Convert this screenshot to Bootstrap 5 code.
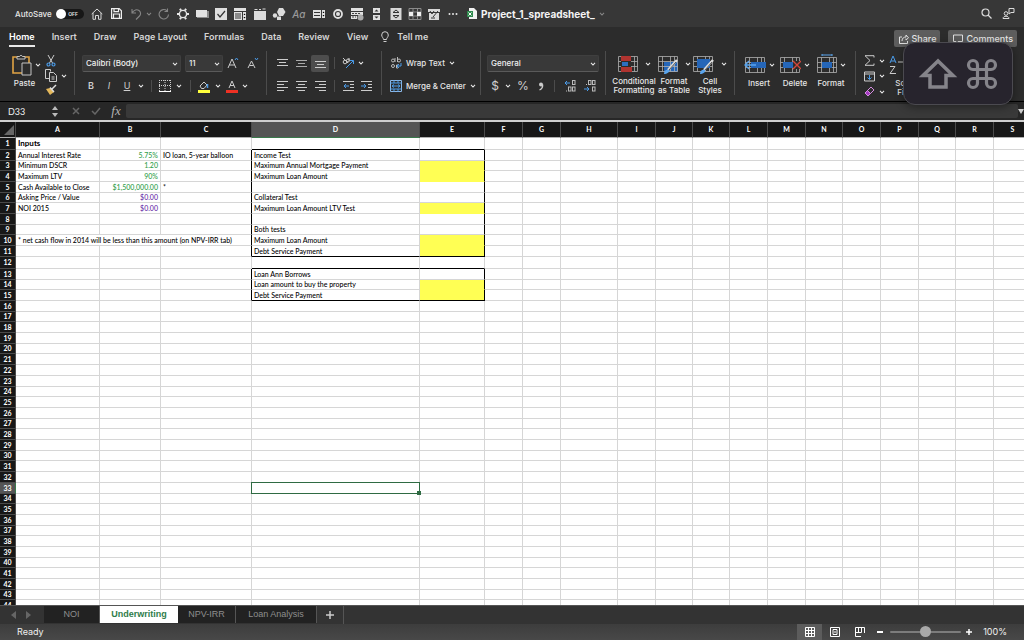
<!DOCTYPE html>
<html lang="en" data-bs-theme="dark">
<head>
<meta charset="utf-8">
<meta name="viewport" content="width=device-width, initial-scale=1">
<title>Project_1_spreadsheet_</title>
<link href="https://cdn.jsdelivr.net/npm/bootstrap@5.3.0/dist/css/bootstrap.min.css" rel="stylesheet">
<style>
  :root { --ui: Inter, "Liberation Sans", sans-serif; --cell: Lato, "Noto Sans", sans-serif; }
  body { font-family: var(--ui); font-size: 8px; line-height: 10px; color: #e6e6e6; background: #2c2c2c; }
  svg { display: block; flex: none; }
  .ib { background: none; border: 0; padding: 0; color: inherit; display: inline-flex; align-items: center; justify-content: center; flex: none; font-weight: 500; }
  .titlebar { height: 27px; background: #373737; font-size: 8px; }
  .quickbar { width: 284px; }
  .redo { margin: 0 2px; }
  .autosave { font-size: 8px; font-weight: 500; padding-left: 15px; width: 88px; }
  .switch { appearance: none; width: 28px; height: 10px; border-radius: 5px; background: #171717; margin: 0; position: relative; flex: none; }
  .switch::before { content: ""; position: absolute; left: 0; top: 0; width: 10px; height: 10px; border-radius: 50%; background: #fff; }
  .switch-text { position: absolute; right: 10px; top: 0; font-size: 5px; font-weight: 600; pointer-events: none; }
  .doc-title { font-size: 10px; font-weight: 700; color: #f4f4f4; margin-left: 7px; }
  .menubar { height: 22px; font-size: 9px; font-weight: 600; gap: 17px; padding-left: 9px; }
  .menubar a { color: #d4d4d4; text-decoration: none; height: 20px; line-height: 20px; }
  .menubar a.active { color: #fff; font-weight: 600; border-bottom: 2px solid #e8e8e8; }
  .menubar a.tell { margin-left: -4px; }
  .acts { padding-right: 7px; padding-top: 3px; }
  .act { height: 17px; background: #5d5d5d; border: 0; border-radius: 2px; color: #e6e6e6; font-size: 9px; font-weight: 500; padding: 0 4px 0 5px; display: inline-flex; align-items: center; gap: 3px; }
  .ribbon { height: 53px; padding-top: 2px; border-bottom: 1px solid #000; overflow: hidden; }
  .group { height: 44px; flex: none; border-right: 1px solid #4c4c4c; }
  .two { display: flex; flex-direction: column; gap: 4px; padding-top: 2px; }
  .two > .line1 { height: 20px; display: flex; align-items: center; }
  .two > .line2 { height: 18px; display: flex; align-items: center; }
  .sep { width: 1px; height: 12px; background: #4c4c4c; flex: none; margin: 0 5px; }
  .g-clip { width: 75px; } .g-font { width: 192px; padding-left: 7px; } .g-align { width: 115px; padding-left: 6px; }
  .g-wrap { width: 99px; padding-left: 8px; } .g-num { width: 125px; padding-left: 6px; } .g-style { width: 129px; padding-left: 6px; }
  .g-cells { width: 121px; padding-left: 6px; }
  .w10 { width: 10px; } .w12 { width: 12px; } .w16 { width: 16px; } .w18 { width: 18px; } .w19 { width: 19px; } .w20 { width: 20px; }
  .pick { position: relative; flex: none; }
  .pick select { appearance: none; width: 100%; height: 17px; border: 1px solid #3f3f3f; border-bottom-color: #5a5a5a; border-radius: 2px; background: #393939; color: #f0f0f0; font-size: 8px; font-weight: 500; padding: 0 3px; line-height: 10px; display: block; }
  .pick svg { position: absolute; right: 3px; top: 7px; pointer-events: none; }
  .p-font { width: 99px; } .p-size { width: 38px; } .p-num { width: 112px; }
  .big { background: none; border: 0; padding: 0; color: inherit; width: 36px; flex: none; font-weight: 500; line-height: 9px; white-space: nowrap; display: flex; flex-direction: column; align-items: center; overflow: visible; }
  .big .pic { height: 28px; display: flex; align-items: center; gap: 3px; }
  .w44 { width: 44px; }
  .pressed { background: #4d4d4d; border-radius: 2px; height: 17px; }
  .let { font-size: 9px; font-weight: 400; color: #cfcfcf; } .bold { font-weight: 600; }
  .sign { font-size: 12px; font-weight: 400; color: #cfcfcf; }
  .faint { color: #999; font-size: 10px; }
  .fbar { height: 18px; background: #272727; }
  .fbar input { border: 0; color: #f0f0f0; font-family: var(--cell); font-size: 9px; padding: 0; height: 14px; }
  .namebox { width: 40px; background: transparent; }
  .formula { background: #393939; border-radius: 2px; }
  .fx { font-family: "Liberation Serif", serif; font-style: italic; font-size: 13px; color: #b4b4b4; }
  .edge { height: 2px; background: #cfcfcf; }
  .sheet { background: #fff; overflow: hidden; }
  .cells { width: calc(100% + 8px); table-layout: fixed; border-collapse: separate; border-spacing: 0; font-family: var(--cell); font-size: 7px; color: #000; }
  .cells th, .cells td { padding: 0; line-height: 10px; height: 11px; white-space: nowrap; border: 0 solid #d6d6d6; border-width: 0 1px 1px 0; }
  .cells td { padding: 0 2px; font-weight: 500; }
  .cells th { background: #171717; color: #fff; text-align: center; font-weight: 700; border-color: #4a4a4a; font-size: 7px; }
  .cells thead th { height: 16px; line-height: 15px; border-bottom-color: #b0b0b0; }
  .cells thead th.cur { background: #555; border-bottom-color: #3a7a4c; }
  .cells tbody th.cur { background: #555; border-right-color: #3a7a4c; }
  .cells .short th, .cells .short td { height: 10px; line-height: 9px; }
  .cells .tall th, .cells .tall td { height: 12px; line-height: 11px; }
  .cells td.kr { border-right-color: #000; } .cells td.kb { border-bottom-color: #000; }
  .cells td.ye { background: #ffff54; } .cells td.ye:not(.kb) { border-bottom-color: #ffff54; }
  .cells td.gr { color: #2fa04a; } .cells td.pu { color: #6a2fa8; } .cells td.num { text-align: right; }
  .cells td.head { font-weight: 700; font-size: 8px; }
  .picked { position: relative; }
  .picked i { position: absolute; inset: -1px; border: 1px solid #2f6b43; }
  .picked i::after { content: ""; position: absolute; right: -2px; bottom: -2px; width: 4px; height: 4px; background: #2f6b43; }
  .c-row { width: 16px; } .c-a { width: 84px; } .c-b { width: 61px; } .c-c { width: 91px; } .c-d { width: 168px; } .c-e { width: 65px; }
  .c-h { width: 57px; } .c-37 { width: 37px; } .c-38 { width: 38px; }
  .tabs { height: 19px; background: #333; border-top: 1px solid #555; font-family: "Liberation Sans", sans-serif; font-size: 9px; }
  .tabs a { color: #8e8e8e; text-decoration: none; background: #222; height: 17px; line-height: 17px; text-align: center; border-right: 1px solid #555; flex: none; }
  .tabs a.active { background: #fff; color: #2f7d4a; font-weight: 700; border: 0; }
  .t-nav { width: 44px; padding-left: 9px; }
  .t-noi { width: 56px; } .t-und { width: 78px; } .t-npv { width: 58px; } .t-loan { width: 81px; }
  .plus { width: 27px; height: 18px; border-right: 1px solid #555; }
  .status { height: 16px; background: linear-gradient(#3d3d3d, #484848); font-size: 9px; color: #f0f0f0; padding: 0 17px; }
  .vw { width: 25px; height: 16px; } .vw.on { background: #5c5c5c; }
  .zoomer { appearance: none; width: 71px; height: 12px; background: transparent; margin: 0 2px; }
  .zoomer::-webkit-slider-runnable-track { height: 2px; background: #7c7c7c; border-radius: 1px; }
  .zoomer::-webkit-slider-thumb { appearance: none; width: 11px; height: 11px; margin-top: -5px; border-radius: 50%; background: #a8a8a8; }
  .keys { position: absolute; top: 42px; right: 11px; width: 110px; height: 63px; border-radius: 12px; background: #27242d; border: 1px solid #4b4a50; box-shadow: 0 2px 8px #0006; z-index: 5; }
</style>
</head>
<body class="vh-100 overflow-hidden d-flex flex-column position-relative">
<svg width="0" height="0" class="position-absolute"><defs>
  <symbol id="chev" viewBox="0 0 6 4"><path d="M1 .8 3 3 5 .8" fill="none" stroke="currentColor" stroke-width="1.1"/></symbol>
  <symbol id="grid" viewBox="0 0 20 16"><path d="M.5.5h19v15H.5zM.5 5.500h19M.5 10.500h19M4.500.5v15M12.500.5v15M16.500.5v15" fill="none" stroke="#b0b0b0" stroke-opacity=".8"/></symbol>
</defs></svg>

<header class="titlebar d-flex align-items-center flex-shrink-0">
  <label class="autosave d-flex align-items-center gap-1 position-relative">AutoSave<input type="checkbox" class="switch" role="switch"><span class="switch-text">OFF</span></label>
  <button class="ib w18" aria-label="Home"><svg width="12" height="12" viewBox="0 0 12 12" fill="none" stroke="#d8d8d8"><path d="M.7 6 6 1l5.300 5M2 5v6.300h2.500V7.500h3v3.800H10V5"/></svg></button>
  <button class="ib w20" aria-label="Save"><svg width="11" height="11" viewBox="0 0 11 11" fill="none" stroke="#eee" stroke-width="1.200"><path d="M.6.6h7.600l2.200 2.200v7.600H.6zM3 .6v3h4.500v-3M2.500 10.400V6h6v4.400"/></svg></button>
  <button class="ib w20" aria-label="Undo"><svg width="11" height="12" viewBox="0 0 11 12" fill="none" stroke="#858585" stroke-width="1.100"><path d="M1 1v4h4M1 5C3 1.500 6 1.200 8 2.500c2 1.500 2 4 .5 5.500L5 11.500"/></svg></button>
  <button class="ib" aria-label="Undo history"><svg width="6" height="4" color="#858585"><use href="#chev"/></svg></button>
  <button class="ib w20 redo" aria-label="Redo"><svg width="12" height="12" viewBox="0 0 12 12" fill="none" stroke="#858585" stroke-width="1.100"><path d="M10.500 6.500A4.700 4.700 0 1 1 9 2.800M9.500.5v3h-3"/></svg></button>
  <div class="quickbar d-flex align-items-center justify-content-between flex-shrink-0">
    <button class="ib" aria-label="Settings"><svg width="14" height="14" viewBox="0 0 14 14" fill="none" stroke="#e6e6e6"><circle cx="7" cy="7" r="3.600" stroke-width="1.400"/><path stroke-width="2" d="M11 7h2M9 10.500l1 1.700M5 10.500l-1 1.700M3 7H1M5 3.500 4 1.800M9 3.500l1-1.700"/></svg></button>
    <button class="ib" aria-label="Button control"><svg width="14" height="14" viewBox="0 0 14 14"><path fill="#8b8b8b" d="M2 4h12v7H2z"/><path fill="#e2e2e2" d="M1 3h11v7H1z"/></svg></button>
    <button class="ib" aria-label="Check box"><svg width="14" height="14" viewBox="0 0 14 14"><path fill="#dedede" d="M1 1h12v12H1z"/><path d="m3.500 7 2.500 3 5-6" fill="none" stroke="#333" stroke-width="1.200"/></svg></button>
    <button class="ib" aria-label="List box"><svg width="14" height="14" viewBox="0 0 14 14"><path fill="#e2e2e2" d="M1 1h12v3H1zM1 5h8v8H1zM10 5h3v8h-3z"/><path d="M2 7h6M2 9h6M2 11h6" stroke="#333"/><path d="m10.500 8 1-1.500 1 1.500zM10.500 10l1 1.500 1-1.500z"/></svg></button>
    <button class="ib" aria-label="Group box"><svg width="14" height="14" viewBox="0 0 14 14"><path fill="#dcdcdc" d="M1 4h12v9H1z"/><path d="M1.500 2.500h3M6 2.500h2M9.500 2h3" stroke="#dcdcdc"/></svg></button>
    <button class="ib" aria-label="Shapes"><svg width="14" height="14" viewBox="0 0 14 14" fill="#dcdcdc"><path d="M7 1h4l2.500 4L11 9H7L5 5z"/><circle cx="3" cy="8.500" r="2.200"/><path d="M5 9.500h4v3.500H5z"/></svg></button>
    <button class="ib faint fst-italic w16" aria-label="Label">Aɑ</button>
    <button class="ib" aria-label="Combo box"><svg width="14" height="14" viewBox="0 0 14 14"><path fill="#e0e0e0" d="M1 3h8v8H1zM10 3h3v8h-3z"/><path d="M2 5.500h6M2 8.500h6" stroke="#333"/><path d="m10.500 6 1-1.500 1 1.500zM10.500 8l1 1.500 1-1.500z"/></svg></button>
    <button class="ib" aria-label="Option button"><svg width="14" height="14" viewBox="0 0 14 14" fill="none"><circle cx="7" cy="7" r="4" stroke="#e0e0e0" stroke-width="1.800"/><circle cx="7" cy="7" r="2" fill="#e0e0e0"/></svg></button>
    <button class="ib" aria-label="Combo list"><svg width="14" height="14" viewBox="0 0 14 14"><path fill="#e0e0e0" d="M1 1h12v3H1zM1 5h12v3H1zM1 9h6v3H1z"/><path d="M2 6.500h9M2 10h4" stroke="#444" stroke-dasharray="2 1"/><circle cx="10.500" cy="10.500" r="3" fill="#aaa"/></svg></button>
    <button class="ib" aria-label="Scroll bar"><svg width="14" height="14" viewBox="0 0 14 14" fill="#e0e0e0"><path d="M4 1h7v5H4zM4 8h7v5H4z"/><path d="m5.500 4.500 2-2 2 2zM5.500 9.500l2 2 2-2z" fill="#333"/></svg></button>
    <button class="ib" aria-label="Spin button"><svg width="14" height="14" viewBox="0 0 14 14"><path fill="#d8d8d8" d="M1.500 1h11v12h-11z"/><path d="M4 5.500 7 3l3 2.500zM4 8.500 7 11l3-2.500z" fill="none" stroke="#333"/></svg></button>
    <button class="ib" aria-label="Grid lines"><svg width="14" height="14" viewBox="0 0 14 14"><path d="M1 1.500h12v11H1zM1 5h12M1 9h12M5 1v12M9.500 1v12" fill="none" stroke="#8a8a8a"/><path fill="#eee" d="M1 5h4v4H1zM9 5h4v4H9z"/></svg></button>
    <button class="ib" aria-label="Edit code"><svg width="14" height="14" viewBox="0 0 14 14"><path fill="#d8d8d8" d="M1 2h12v3H1zM2 6h10v7H2z"/><path d="m3 4 2 3 2-3M6 10l5-6M4 11h4" fill="none" stroke="#333"/></svg></button>
    <button class="ib" aria-label="More"><svg width="14" height="14" viewBox="0 0 14 14" fill="#e6e6e6"><circle cx="3.500" cy="7" r="1"/><circle cx="7" cy="7" r="1"/><circle cx="10.500" cy="7" r="1"/></svg></button>
  </div>
  <button class="ib doc-title gap-1"><svg width="10" height="11" viewBox="0 0 10 11"><path fill="#f2f2f2" d="M2 0h5l3 3v8H2z"/><path fill="#2f8a4e" d="M0 3h6v6H0z"/><path stroke="#fff" d="m1.500 4.500 3 3M4.500 4.500l-3 3"/></svg>Project_1_spreadsheet_<svg width="6" height="4" color="#858585"><use href="#chev"/></svg></button>
  <button class="ib w12 ms-auto" aria-label="Search"><svg width="11" height="11" viewBox="0 0 11 11" fill="none" stroke="#dcdcdc" stroke-width="1.200"><circle cx="4.500" cy="4.500" r="3.500"/><path d="m7 7 3.500 3.500"/></svg></button>
  <button class="ib w12 ms-2 me-2 px-2" aria-label="Presence"><svg width="13" height="13" viewBox="0 0 13 13" fill="none" stroke="#dcdcdc"><circle cx="4" cy="6.500" r="1.800"/><path d="M1 11.500c0-3 6-3 6 0zM7 1.500h5v4H9l-2 1.500z"/></svg></button>
</header>

<div class="d-flex align-items-start flex-shrink-0">
  <nav class="menubar d-flex flex-grow-1 align-items-start">
    <a href="#" class="active">Home</a><a href="#">Insert</a><a href="#">Draw</a><a href="#">Page Layout</a><a href="#">Formulas</a><a href="#">Data</a><a href="#">Review</a><a href="#">View</a>
    <a href="#" class="tell d-flex align-items-center gap-2"><svg width="8" height="12" viewBox="0 0 8 12" fill="none" stroke="#d0d0d0"><path d="M2.500 8.500C2.500 7 .7 6 .7 4a3.300 3.300 0 0 1 6.600 0c0 2-1.800 3-1.800 4.500zM2.500 10.500h3"/></svg>Tell me</a>
  </nav>
  <div class="acts d-flex gap-2">
    <button class="act"><svg width="10" height="10" viewBox="0 0 10 10" fill="none" stroke="#e0e0e0"><path d="M3 3H.5v6.500h8V7M3 7c0-3 2-4 4-4V1l2.500 2.800L7 6V4.500"/></svg>Share</button>
    <button class="act"><svg width="10" height="10" viewBox="0 0 10 10" fill="none" stroke="#e0e0e0"><path d="M.5 1h9v6.500H5l-2 2v-2H.5z"/></svg>Comments</button>
  </div>
</div>

<div class="ribbon d-flex flex-shrink-0">
  <div class="group g-clip d-flex">
    <button class="big w-auto ps-2 ms-1"><span class="pic"><svg width="20" height="22" viewBox="0 0 20 22" fill="none"><path d="M1 3h16v16H1z" stroke="#e0a344" stroke-width="1.600"/><path d="M5 5V2.500h2.500a1.600 1.600 0 0 1 3 0H13V5z" fill="#2c2c2c" stroke="#c4c4c4"/><path d="M10 9h9v12h-9z" fill="#2c2c2c" stroke="#c4c4c4"/></svg><svg width="6" height="4"><use href="#chev"/></svg></span><span class="pe-1">Paste</span></button>
    <div class="d-flex flex-column justify-content-between ps-1 pt-1">
      <button class="ib justify-content-start" aria-label="Cut"><svg width="12" height="12" viewBox="0 0 12 12" fill="none" stroke="#ccc"><path d="m3 0 4.500 8M9 0 4.500 8"/><g stroke="#4a9be8" stroke-width="1.200"><circle cx="3.500" cy="9.500" r="1.500"/><circle cx="8.500" cy="9.500" r="1.500"/></g></svg></button>
      <button class="ib gap-1" aria-label="Copy"><svg width="12" height="13" viewBox="0 0 12 13" fill="none" stroke="#ccc"><path d="M4 9.500H.5v-9h5v2M4.500 3.500h4l3 3v6h-7zM6.500 8h3M6.500 10h3"/></svg><svg width="6" height="4"><use href="#chev"/></svg></button>
      <button class="ib justify-content-start" aria-label="Format painter"><svg width="12" height="11" viewBox="0 0 12 11"><path fill="#e3b75a" d="m1 5 4-1 4 4-4 3z"/><path d="M5 3.500 9 8M7 5l4-4" stroke="#ddd" stroke-width="1.500"/></svg></button>
    </div>
  </div>

  <div class="group two g-font">
    <div class="line1 gap-1">
      <div class="pick p-font"><select aria-label="Font"><option>Calibri (Body)</option></select><svg width="6" height="4"><use href="#chev"/></svg></div>
      <div class="pick p-size"><select aria-label="Font size"><option>11</option></select><svg width="6" height="4"><use href="#chev"/></svg></div>
      <button class="ib w12" aria-label="Increase font size"><svg width="12" height="12" viewBox="0 0 12 12" fill="none" stroke="#ccc"><path d="M1 11 5 2l4 9M2.300 8h5.400"/><path stroke="#4a9be8" d="m8 3 1.500-2L11 3"/></svg></button>
      <button class="ib w20" aria-label="Decrease font size"><svg width="12" height="12" viewBox="0 0 12 12" fill="none" stroke="#ccc"><path d="m1 11 3.500-7L8 11M2.500 8.500h4"/><path stroke="#4a9be8" d="m8 1 1.500 2L11 1"/></svg></button>
    </div>
    <div class="line2">
      <button class="ib w18 let bold">B</button><button class="ib w18 let fst-italic">I</button><button class="ib w18 let text-decoration-underline">U</button><button class="ib w10" aria-label="Underline styles"><svg width="6" height="4"><use href="#chev"/></svg></button>
      <span class="sep"></span>
      <button class="ib w16" aria-label="Borders"><svg width="12" height="12" viewBox="0 0 12 12" fill="none" stroke="#d0d0d0"><path stroke-dasharray="1 1" d="M.5 0v11M6 0v11M11.500 0v11M0 .5h12M0 5.500h12"/><path stroke="#fff" d="M0 11.500h12"/></svg></button><button class="ib w12" aria-label="Border styles"><svg width="6" height="4"><use href="#chev"/></svg></button>
      <span class="sep"></span>
      <button class="ib w16" aria-label="Fill colour"><svg width="12" height="13" viewBox="0 0 12 13" fill="none"><path stroke="#ccc" d="m2 6 4-4 3 3-3 3.500H3.500z"/><path stroke="#4a9be8" stroke-width="1.500" d="M9.500 4v4"/><path fill="#ffff3c" d="M0 10h12v3H0z"/></svg></button><button class="ib w12" aria-label="Fill colours"><svg width="6" height="4"><use href="#chev"/></svg></button>
      <button class="ib w16" aria-label="Font colour"><svg width="12" height="13" viewBox="0 0 12 13" fill="none"><path stroke="#ccc" d="m3 8 3-7 3 7M4 5.500h4"/><path fill="#ee3124" d="M0 10h12v3H0z"/></svg></button><button class="ib w10" aria-label="Font colours"><svg width="6" height="4"><use href="#chev"/></svg></button>
    </div>
  </div>

  <div class="group two g-align">
    <div class="line1">
      <button class="ib w19" aria-label="Top align"><svg width="11" height="10" stroke="#ccc"><path d="M0 1.500h11M2 4.500h7M0 7.500h11"/></svg></button>
      <button class="ib w19" aria-label="Middle align"><svg width="11" height="10" stroke="#aaa"><path d="M0 2.500h11M2 5.500h7M0 8.500h11"/></svg></button>
      <button class="ib w18 pressed" aria-label="Bottom align"><svg width="11" height="12" stroke="#ccc"><path d="M0 4.500h11M2 7.500h7M0 10.500h11"/></svg></button>
      <span class="sep"></span>
      <button class="ib w16" aria-label="Orientation"><svg width="12" height="12" viewBox="0 0 12 12" fill="none" stroke="#ccc"><circle cx="3" cy="5" r="1.800"/><path d="m1 1 5 5M7 1v3"/><circle cx="6" cy="3.500" r="1.500"/><path stroke="#4a9be8" d="m4 11 7-7M8 3.500h3.500V7"/></svg></button><button class="ib w10" aria-label="Orientations"><svg width="6" height="4"><use href="#chev"/></svg></button>
    </div>
    <div class="line2">
      <button class="ib w19" aria-label="Align left"><svg width="11" height="10" stroke="#ccc"><path d="M0 .5h11M0 3.500h7M0 6.500h11M0 9.500h7"/></svg></button>
      <button class="ib w19" aria-label="Centre"><svg width="11" height="10" stroke="#ccc"><path d="M0 .5h11M2 3.500h7M0 6.500h11M2 9.500h7"/></svg></button>
      <button class="ib w18" aria-label="Align right"><svg width="11" height="10" stroke="#ccc"><path d="M0 .5h11M4 3.500h7M0 6.500h11M4 9.500h7"/></svg></button>
      <span class="sep"></span>
      <button class="ib w16" aria-label="Decrease indent"><svg width="11" height="10" fill="none" stroke="#ccc"><path d="M0 .5h11M7 3.500h4M7 6.500h4M0 9.500h11"/><path stroke="#4a9be8" d="M6 5H1M3 3 1 5l2 2"/></svg></button>
      <button class="ib w20" aria-label="Increase indent"><svg width="11" height="10" fill="none" stroke="#ccc"><path d="M0 .5h11M7 3.500h4M7 6.500h4M0 9.500h11"/><path stroke="#4a9be8" d="M0 5h5M3 3l2 2-2 2"/></svg></button>
    </div>
  </div>

  <div class="group two g-wrap">
    <div class="line1"><button class="ib gap-1"><svg width="12" height="12" viewBox="0 0 12 12" fill="none" stroke="#bbb"><circle cx="3" cy="3.500" r="1.500"/><path d="M5 1v4M7.500 0v5M8 8H6.500v3H8"/><circle cx="9" cy="3.500" r="1.500"/><circle cx="3" cy="9" r="1.500"/><path stroke="#4a9be8" d="M11 6v3H7M9 7 7 9l2 2"/></svg>Wrap Text<svg width="6" height="4"><use href="#chev"/></svg></button></div>
    <div class="line2"><button class="ib gap-1"><svg width="12" height="12" viewBox="0 0 12 12" fill="none" stroke="#4a9be8"><path d="M.5.5h11v11H.5z" stroke="#8bb8e8"/><path d="M.5 3h11M.5 9h11M4 .5V3M8 .5V3M4 9v2.500M8 9v2.500M2 6h8M4 4.500 2 6l2 1.500M8 4.500 10 6 8 7.500"/></svg>Merge &amp; Center<svg width="6" height="4"><use href="#chev"/></svg></button></div>
  </div>

  <div class="group two g-num">
    <div class="line1"><div class="pick p-num"><select aria-label="Number format"><option>General</option></select><svg width="6" height="4"><use href="#chev"/></svg></div></div>
    <div class="line2">
      <button class="ib w16 sign">$</button><button class="ib w10" aria-label="Currencies"><svg width="6" height="4"><use href="#chev"/></svg></button>
      <button class="ib w20 sign">%</button>
      <button class="ib w16" aria-label="Comma style"><svg width="6" height="9" viewBox="0 0 6 9"><circle cx="3" cy="2.600" r="2" fill="#ccc"/><path d="M4.500 2.500C5 5 4 7 1.500 8" fill="none" stroke="#ccc" stroke-width="1.300"/></svg></button>
      <span class="sep"></span>
      <button class="ib w20" aria-label="Increase decimal"><svg width="12" height="12" viewBox="0 0 12 12" fill="none" stroke="#bbb"><path stroke="#4a9be8" d="M6 3H1M3 1 1 3l2 2"/><rect x="8.500" y=".5" width="2.500" height="4"/><rect x="4.500" y="7" width="2.500" height="4"/><rect x="8.500" y="7" width="2.500" height="4"/><path d="M2 11h1"/></svg></button>
      <button class="ib w20" aria-label="Decrease decimal"><svg width="12" height="12" viewBox="0 0 12 12" fill="none" stroke="#bbb"><path stroke="#4a9be8" d="M0 9h5M3 7l2 2-2 2"/><rect x="4.500" y=".5" width="2.500" height="4"/><rect x="8.500" y=".5" width="2.500" height="4"/><rect x="8.500" y="7" width="2.500" height="4"/><path d="M2 4.500h1"/></svg></button>
    </div>
  </div>

  <div class="group g-style d-flex">
    <button class="big w44"><span class="pic"><svg width="20" height="16"><use href="#grid" width="20" height="16"/><path fill="#b03430" d="M3 0h10v5H3zM3 11h11v5H3z"/><path fill="#2c2c2c" d="M3 5h10v6H3z"/><path fill="#2d6fc0" d="M4 6h6v4H4z"/></svg><svg class="ms-1" width="6" height="4"><use href="#chev"/></svg></span>Conditional<br>Formatting</button>
    <button class="big"><span class="pic"><svg width="20" height="20" viewBox="0 -2 20 20"><path fill="#2566b8" d="M6 6h14v10H6z"/><use href="#grid" width="20" height="16"/><path d="m19 4-9 10" stroke="#ddd" stroke-width="2.500"/><path d="m18 6-7 8" stroke="#555"/><path fill="#5aa5ee" d="M6 18c0-3 2-5 5-4 1 2-2 4-5 4z"/></svg><svg class="ms-1" width="6" height="4"><use href="#chev"/></svg></span><span class="text-center">Format<br>as Table</span></button>
    <button class="big"><span class="pic"><svg width="21" height="20" viewBox="0 -2 21 20"><use href="#grid" width="20" height="16"/><path fill="#2566b8" d="M4 3h13v9H4z"/><path d="m20 4-9 10" stroke="#ddd" stroke-width="2.500"/><path d="m19 6-7 8" stroke="#555"/><path fill="#5aa5ee" d="M7 18c0-3 2-5 5-4 1 2-2 4-5 4z"/></svg><svg class="ms-1" width="6" height="4"><use href="#chev"/></svg></span>Cell<br>Styles</button>
  </div>

  <div class="group g-cells d-flex">
    <button class="big"><span class="pic"><svg width="22" height="16"><use href="#grid" x="1" width="20" height="16"/><path fill="#2566b8" d="M7 5h15v6H7z"/><path d="M12 8H1M5 4 1 8l4 4" fill="none" stroke="#5aa5ee" stroke-width="1.300"/></svg><svg width="6" height="4"><use href="#chev"/></svg></span>Insert</button>
    <button class="big"><span class="pic"><svg width="21" height="16"><use href="#grid" width="20" height="16"/><path fill="#2c2c2c" d="M13 4h8v8h-8z"/><path fill="#2566b8" d="M3 5h10v6H3z"/><path d="m13 4 8 8m0-8-8 8" stroke="#d2463c" stroke-width="1.400"/></svg><svg width="6" height="4"><use href="#chev"/></svg></span>Delete</button>
    <button class="big"><span class="pic"><svg width="20" height="22" viewBox="0 -3 20 22"><use href="#grid" width="20" height="16"/><path fill="#2566b8" d="M5 5h10v6H5z"/><path d="M5-2h10M5-3v2M15-3v2" stroke="#5aa5ee"/></svg><svg width="6" height="4"><use href="#chev"/></svg></span>Format</button>
  </div>

  <div class="d-flex ps-1 gap-1 flex-shrink-0">
    <div class="d-flex flex-column justify-content-between ps-1 pt-1 pb-1">
      <button class="ib gap-1" aria-label="AutoSum"><svg width="11" height="11" viewBox="0 0 11 11" fill="none" stroke="#ccc"><path d="M10 2.500V.7H1l5 4.800-5 4.800h9V8.500"/></svg><svg width="6" height="4"><use href="#chev"/></svg></button>
      <button class="ib gap-1" aria-label="Fill"><svg width="11" height="11" viewBox="0 0 11 11" fill="none" stroke="#ccc"><path d="M.5 1h10v9H.5zM.5 3h10"/><path stroke="#4a9be8" d="M5.500 4v4.500M3.500 6.500l2 2 2-2"/></svg><svg width="6" height="4"><use href="#chev"/></svg></button>
      <button class="ib gap-1" aria-label="Clear"><svg width="11" height="11" viewBox="0 0 11 11" fill="none" stroke="#d58be0"><path d="m1 7 6-6 3 3-6 6z"/><path fill="#a33cc0" d="m1 7 2.500-2.500 3 3L4 10z"/></svg><svg width="6" height="4"><use href="#chev"/></svg></button>
    </div>
    <button class="big"><span class="pic w-100"><svg width="20" height="20" viewBox="0 0 20 20" fill="none"><path stroke="#4a9be8" d="m1 8 3-7 3 7M2 6h4"/><path stroke="#ccc" d="M1 11.500h5l-5 7h6M9 7h10l-4 5v5"/></svg></span>Sort &amp;<br>Filter</button>
  </div>
</div>

<div class="fbar d-flex align-items-center flex-shrink-0 ps-2">
  <input class="namebox" aria-label="Name box" value="D33">
  <svg class="ms-1" width="6" height="12" fill="#bbb"><path d="m0 5 3-4 3 4zM0 8l3 4 3-4z"/></svg>
  <button class="ib w20 ms-2" aria-label="Cancel"><svg width="8" height="8" stroke="#666" stroke-width="1.500"><path d="m1 1 6 6M7 1 1 7"/></svg></button>
  <button class="ib w20" aria-label="Enter"><svg width="10" height="8" fill="none" stroke="#666" stroke-width="1.500"><path d="m1 4 3 3 5-6"/></svg></button>
  <button class="ib w20 fx">fx</button>
  <input class="formula flex-grow-1" aria-label="Formula">
  <svg width="6" height="6" fill="#ccc"><path d="M0 1h6L3 6z"/></svg>
</div>
<div class="edge flex-shrink-0"></div>

<main class="sheet flex-grow-1">
  <table class="cells">
    <colgroup><col class="c-row"><col class="c-a"><col class="c-b"><col class="c-c"><col class="c-d"><col class="c-e"><col class="c-38"><col class="c-38"><col class="c-h"><col class="c-38"><col class="c-37"><col class="c-37"><col class="c-38"><col class="c-38"><col class="c-37"><col class="c-38"><col class="c-38"><col class="c-37"><col class="c-38"><col></colgroup>
    <thead><tr id="heads"><th><svg class="ms-1" width="10" height="10"><path fill="#666" d="M10 0v10H0z"/></svg></th></tr></thead>
    <tbody id="rows"></tbody>
  </table>
</main>

<nav class="tabs d-flex flex-shrink-0">
  <span class="t-nav d-flex align-items-center gap-2"><svg width="8" height="8" fill="#666"><path d="M7 0v8L2 4z"/></svg><svg width="8" height="8" fill="#666"><path d="M1 0v8l5-4z"/></svg></span>
  <a href="#" class="t-noi">NOI</a><a href="#" class="t-und active">Underwriting</a><a href="#" class="t-npv">NPV-IRR</a><a href="#" class="t-loan">Loan Analysis</a>
  <button class="ib plus" aria-label="Add sheet"><svg width="8" height="8" stroke="#ccc" stroke-width="1.500"><path d="M4 0v8M0 4h8"/></svg></button>
</nav>
<footer class="status d-flex align-items-center flex-shrink-0">
  <span>Ready</span>
  <button class="ib vw on ms-auto" aria-label="Normal view"><svg width="10" height="10" fill="none" stroke="#fff"><path d="M.5.5h9v9h-9zM3.500 0v10M6.500 0v10M0 3.500h10M0 6.500h10"/></svg></button>
  <button class="ib vw" aria-label="Page layout view"><svg width="10" height="10" fill="none" stroke="#fff"><path d="M.5.500h9v9h-9zM3 2.500h4v5H3zM4 5h2"/></svg></button>
  <button class="ib vw" aria-label="Page break view"><svg width="10" height="10" fill="none" stroke="#fff"><path d="M9.500 6V.5h-9v9H6M.5 5.500h6V.5M3.500.5v5"/></svg></button>
  <button class="ib w16" aria-label="Zoom out"><svg width="6" height="2" fill="#fff"><path d="M0 0h6v2H0z"/></svg></button>
  <input type="range" class="zoomer" aria-label="Zoom" min="0" max="100" value="50">
  <button class="ib w12" aria-label="Zoom in"><svg width="6" height="6" stroke="#fff" stroke-width="1.500"><path d="M3 0v6M0 3h6"/></svg></button>
  <span class="ms-2">100%</span>
</footer>

<div class="keys d-flex align-items-center justify-content-center gap-2">
  <svg width="40" height="32" viewBox="0 0 40 32" fill="none" stroke="#85848a" stroke-width="3.500"><path d="M20 3 5 17.500h7V29h16V17.500h7z"/></svg>
  <svg width="32" height="32" viewBox="0 0 32 32" fill="none" stroke="#85848a" stroke-width="3.200"><path d="M11.500 11.500v9h9v-9zM11.500 11.500h-4.500a4.500 4.500 0 1 1 4.500-4.500zM20.500 11.500V7a4.500 4.500 0 1 1 4.500 4.500zM20.500 20.500H25a4.500 4.500 0 1 1-4.500 4.500zM11.500 20.500V25A4.500 4.500 0 1 1 7 20.500z"/></svg>
</div>

<script>
  const letters = 'ABCDEFGHIJKLMNOPQRS'.split('');
  const short = new Set([3, 6, 9, 14, 17, 20, 24, 27, 30, 34, 37, 40, 43]);
  const text = {
    A1: 'Inputs', A2: 'Annual Interest Rate', A3: 'Minimum DSCR', A4: 'Maximum LTV', A5: 'Cash Available to Close',
    A6: 'Asking Price / Value', A7: 'NOI 2015', A10: '* net cash flow in 2014 will be less than this amount (on NPV-IRR tab)',
    B2: '5.75%', B3: '1.20', B4: '90%', B5: '$1,500,000.00', B6: '$0.00', B7: '$0.00', C2: 'IO loan, 5-year balloon', C5: '*',
    D2: 'Income Test', D3: 'Maximum Annual Mortgage Payment', D4: 'Maximum Loan Amount', D6: 'Collateral Test',
    D7: 'Maximum Loan Amount LTV Test', D9: 'Both tests', D10: 'Maximum Loan Amount', D11: 'Debt Service Payment',
    D13: 'Loan Ann Borrows', D14: 'Loan amount to buy the property', D15: 'Debt Service Payment'
  };
  const look = { A1: 'head', B2: 'num gr', B3: 'num gr', B4: 'num gr', B5: 'num gr', B6: 'num pu', B7: 'num pu', D33: 'picked' };
  const boxed = r => (r >= 2 && r <= 11) || (r >= 13 && r <= 15);
  const yellow = [3, 4, 7, 10, 11, 14, 15];

  const heads = document.getElementById('heads');
  for (const c of letters) {
    const th = document.createElement('th');
    th.textContent = c;
    if (c === 'D') th.className = 'cur';
    heads.append(th);
  }
  const body = document.getElementById('rows');
  for (let r = 1; r <= 44; r++) {
    const tr = body.insertRow();
    tr.className = short.has(r) ? 'short' : (r === 1 || r === 12) ? 'tall' : '';
    const th = document.createElement('th');
    th.textContent = r;
    if (r === 33) th.className = 'cur';
    tr.append(th);
    for (const c of letters) {
      if (r === 10 && (c === 'B' || c === 'C')) continue;
      const td = tr.insertCell();
      td.textContent = text[c + r] || '';
      const cls = [look[c + r]];
      if (c + r === 'A10') td.colSpan = 3;
      if (boxed(r) && (c === 'C' || c === 'E' || c + r === 'A10')) cls.push('kr');
      if ((c === 'D' || c === 'E') && [1, 11, 12, 15].includes(r)) cls.push('kb');
      if (c === 'E' && yellow.includes(r)) cls.push('ye');
      td.className = cls.filter(Boolean).join(' ');
      if (c + r === 'D33') td.append(document.createElement('i'));
    }
  }
</script>
<script src="https://cdn.jsdelivr.net/npm/bootstrap@5.3.0/dist/js/bootstrap.bundle.min.js"></script>
</body>
</html>
